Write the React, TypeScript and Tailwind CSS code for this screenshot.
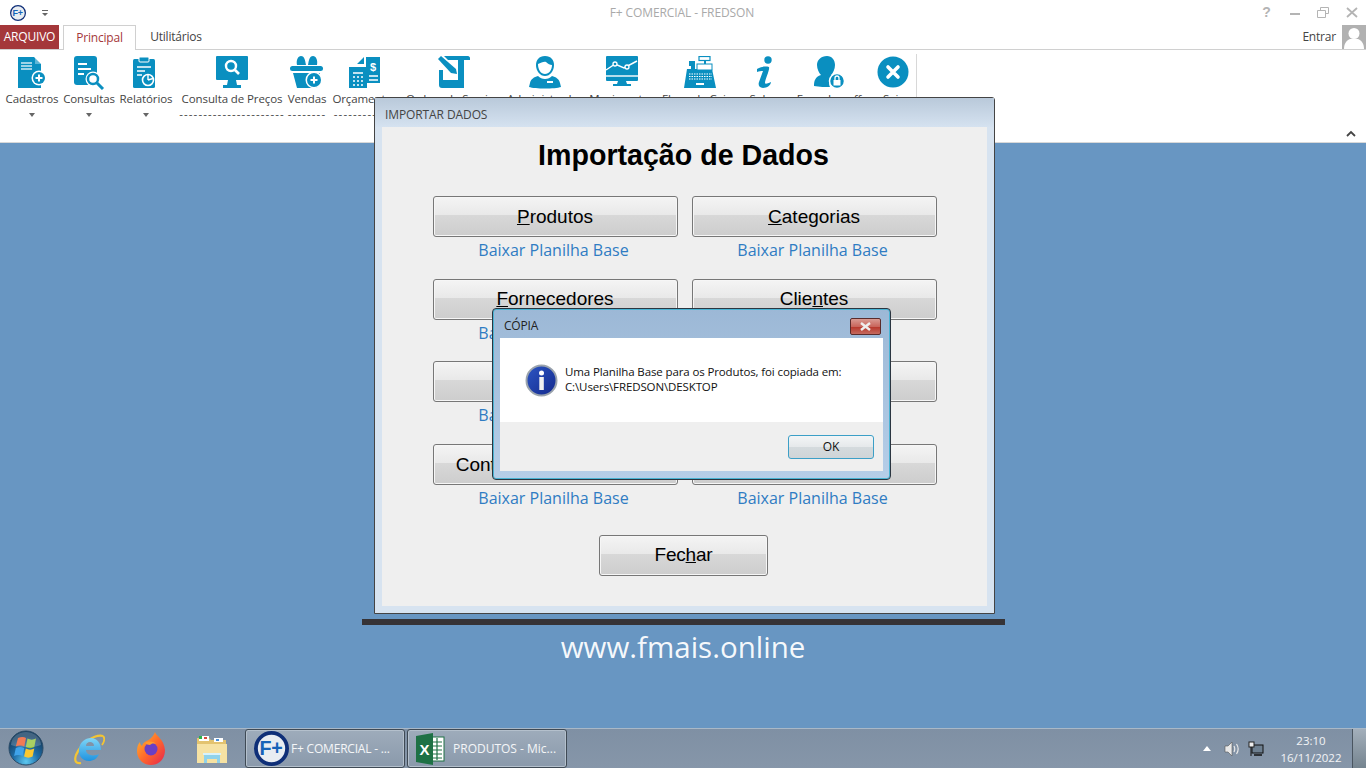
const BLUE = '#0a8fc0'

function Ico({ w = 34, h = 34, children }: { w?: number; h?: number; children: React.ReactNode }) {
  return <svg width={w} height={h} viewBox={`0 0 ${w} ${h}`} fill={BLUE} className="block">{children}</svg>
}

const PlusBadge = ({ cx, cy, r = 7 }: { cx: number; cy: number; r?: number }) => (
  <g>
    <circle cx={cx} cy={cy} r={r + 1.5} fill="#fff" />
    <circle cx={cx} cy={cy} r={r} fill={BLUE} />
    <path d={`M${cx - 3.5} ${cy}h7M${cx} ${cy - 3.5}v7`} stroke="#fff" strokeWidth="2" />
  </g>
)

const icons: Record<string, React.ReactNode> = {
  cadastros: (
    <Ico>
      <path d="M3 1h16l7 7v24H3z" />
      <path d="M6 7h11M6 10h11M6 13h11" stroke="#cfe9f4" strokeWidth="1.3" />
      <path d="M20 1l6 7h-6z" fill="#fff" opacity=".35" />
      <PlusBadge cx={24} cy={22} r={6} />
    </Ico>
  ),
  consultas: (
    <Ico>
      <rect x="2" y="0" width="23" height="29" rx="3" />
      <path d="M6 8h9M6 13h13M6 18h6" stroke="#fff" strokeWidth="2" />
      <circle cx="21" cy="23" r="7.5" fill="#fff" />
      <circle cx="21" cy="23" r="5" fill="none" stroke={BLUE} strokeWidth="2.5" />
      <path d="M25 27l6 6" stroke={BLUE} strokeWidth="3" />
    </Ico>
  ),
  relatorios: (
    <Ico>
      <rect x="4" y="3" width="22" height="29" rx="1.5" />
      <rect x="10" y="1" width="10" height="5" rx="1" stroke="#fff" strokeWidth="1" />
      <path d="M8 11h14M8 15h8M8 19h5" stroke="#fff" strokeWidth="1.6" />
      <circle cx="19" cy="24" r="5.5" fill="none" stroke="#fff" strokeWidth="1.6" />
      <path d="M19 24l5-1.5M19 24v-5" stroke="#fff" strokeWidth="1.4" />
    </Ico>
  ),
  precos: (
    <Ico>
      <rect x="1" y="0" width="32" height="24" rx="1" />
      <path d="M13 24h8l1 5h4v3H8v-3h4z" />
      <circle cx="16" cy="10" r="5" fill="none" stroke="#fff" strokeWidth="2.4" />
      <path d="M20 14l4 4" stroke="#fff" strokeWidth="2.6" />
    </Ico>
  ),
  vendas: (
    <Ico>
      <path d="M11 0c3 0 4 3 5 9H7c-1-5 1-9 4-9zM23 0c-3 0-4 3-5 9h9c1-5-1-9-4-9z" />
      <rect x="0" y="10" width="33" height="5" rx="2.500" />
      <path d="M3 17h27l-3 15H7z" />
      <PlusBadge cx={24} cy={24} r={7} />
    </Ico>
  ),
  orcamentos: (
    <Ico>
      <path d="M9 8l7-7v7zM18 1h14v26H18z" />
      <rect x="1" y="11" width="18" height="21" />
      <path d="M5 17h10M5 21h2M9 21h2M13 21h2M5 25h2M9 25h2M13 25h2M5 29h2M9 29h2M13 29h2" stroke="#fff" strokeWidth="1.6" />
      <path d="M21 20h9M21 24h9" stroke="#fff" strokeWidth="1.5" />
      <text x="25" y="15" fontSize="11" fontWeight="700" fill="#fff" textAnchor="middle" fontFamily="Liberation Sans">$</text>
    </Ico>
  ),
  ordem: (
    <Ico>
      <path d="M8 0h24c1 0 2 1 2 2v2h-6v28h-6V4H12z" />
      <path d="M3 14h4v10h15v8H6c-2 0-3-1-3-3z" />
      <path d="M2 3l3-3 15 13 1 5-6-1z" />
    </Ico>
  ),
  admin: (
    <Ico>
      <path d="M17 0c6 0 9 4 9 9 0 6-4 11-9 11S8 15 8 9c0-5 3-9 9-9z" />
      <path d="M10 8c3-1 6-3 8-2 2 2 4 3 6 3 0 5-3 9-7 9s-7-4-7-10z" fill="#fff" />
      <path d="M10 20c2 2 4 3 7 3s5-1 7-3c4 1 7 3 8 7l1 4c-6 2-26 2-32 0l1-4c1-4 4-6 8-7z" />
      <rect x="19" y="25" width="6" height="2" fill="#fff" />
    </Ico>
  ),
  movimento: (
    <Ico>
      <rect x="1" y="0" width="32" height="25" rx="1" />
      <path d="M1 14l9-6 9 4 13-7" fill="none" stroke="#fff" strokeWidth="1.5" />
      <circle cx="10" cy="8" r="2" fill={BLUE} stroke="#fff" strokeWidth="1.3" />
      <circle cx="22" cy="11" r="2" fill={BLUE} stroke="#fff" strokeWidth="1.3" />
      <path d="M1 20h32" stroke="#fff" strokeWidth="1.4" />
      <path d="M13 25h8l1 3h4v2H8v-2h4z" />
    </Ico>
  ),
  caixa: (
    <Ico>
      <path d="M1 32l3-19h4V9h4v4h17l4 19z" />
      <rect x="6" y="5" width="6" height="5" />
      <rect x="16" y="0.500" width="11" height="4" fill="none" stroke={BLUE} strokeWidth="1.200" />
      <rect x="21" y="5" width="2" height="3" />
      <rect x="14" y="8" width="15" height="6" fill="#fff" stroke={BLUE} />
      <path d="M6 18h23M6 20.500h23M6 23h23" stroke="#fff" strokeWidth="1.100" strokeDasharray="1.500 1" />
      <rect x="13" y="27" width="8" height="2" fill="#fff" />
    </Ico>
  ),
  sobre: (
    <Ico>
      <circle cx="20" cy="4" r="3.700" />
      <path d="M9 13c3-2 8-3 12-2 1 3-4 12-4 16 0 1 2 1 6-1 0 3-4 6-8 6-4 0-5-3-4-6l4-11c-2 0-4 0-6 1z" />
    </Ico>
  ),
  logoff: (
    <Ico>
      <path d="M15 0c5 0 8 4 8 9 0 4-2 8-4 10 2 1 3 1 4 2-5 1-7 6-5 10-4 0-11 0-16-1 0-5 1-9 7-11-2-2-4-6-4-10 0-5 4-9 10-9z" />
      <circle cx="25" cy="25" r="7.500" fill={BLUE} stroke="#fff" strokeWidth="1.500" />
      <rect x="21.500" y="24" width="7" height="5.500" fill="#fff" />
      <path d="M23 24v-2a2 2 0 014 0v2" fill="none" stroke="#fff" strokeWidth="1.300" />
    </Ico>
  ),
  sair: (
    <Ico>
      <circle cx="17" cy="16" r="15.500" />
      <path d="M12 11l10 10M22 11L12 21" stroke="#fff" strokeWidth="3.600" strokeLinecap="round" />
    </Ico>
  ),
}

const ribbon = [
  { id: 'cadastros', label: 'Cadastros', cls: 'w-[52px] ml-[6px]', arrow: true },
  { id: 'consultas', label: 'Consultas', cls: 'w-[52px] ml-[5px]', arrow: true },
  { id: 'relatorios', label: 'Relatórios', cls: 'w-[52px] ml-[5px]', arrow: true },
  { id: 'precos', label: 'Consulta de Preços', cls: 'w-[104px] ml-[8px]', dash: '----------------------' },
  { id: 'vendas', label: 'Vendas', cls: 'w-[40px] ml-[3px]', dash: '--------' },
  { id: 'orcamentos', label: 'Orçamentos', cls: 'w-[64px] ml-[6px]', dash: '-------------' },
  { id: 'ordem', label: 'Ordem de Serviço', cls: 'w-[96px] ml-[8px]' },
  { id: 'admin', label: 'Administrador', cls: 'w-[76px] ml-[6px]' },
  { id: 'movimento', label: 'Movimentos', cls: 'w-[66px] ml-[6px]' },
  { id: 'caixa', label: 'Fluxo de Caixa', cls: 'w-[76px] ml-[7px]' },
  { id: 'sobre', label: 'Sobre', cls: 'w-[34px] ml-[10px]' },
  { id: 'logoff', label: 'Fazer Logoff', cls: 'w-[64px] ml-[15px]' },
  { id: 'sair', label: 'Sair', cls: 'w-[30px] ml-[17px]' },
]

function FormButton({ children, cls }: { children: React.ReactNode; cls: string }) {
  return (
    <div className={`h-[41px] pt-[1px] flex items-center justify-center rounded-[3px] border border-[#777] text-[19px] text-black font-['Liberation_Sans',sans-serif] bg-[linear-gradient(#f4f4f4_0%,#e9e9e9_45%,#d8d8d8_46%,#cdcdcd_100%)] shadow-[inset_0_0_0_1px_#f6f6f6] whitespace-nowrap ${cls}`}>
      <span>{children}</span>
    </div>
  )
}

function ImportCell({ label }: { label: React.ReactNode }) {
  return (
    <div className="w-[245px]">
      <FormButton cls="w-full">{label}</FormButton>
      <div className="mt-[2px] pr-[3px] h-[39.67px] text-center text-[16px] leading-[22px] text-[#2f7cc3]">Baixar Planilha Base</div>
    </div>
  )
}

const Orb = () => (
  <svg width="36" height="36" viewBox="0 0 36 36">
    <defs>
      <radialGradient id="o" cx="50%" cy="90%" r="75%">
        <stop offset="0" stopColor="#5cc8f0" />
        <stop offset=".5" stopColor="#1f6ea8" />
        <stop offset="1" stopColor="#143f63" />
      </radialGradient>
    </defs>
    <circle cx="18" cy="18" r="17" fill="url(#o)" stroke="#2a4a66" />
    <path d="M10 8c3-1.500 6-1.500 8 0l-1.700 8.500c-2.500-1.500-6-1.500-8.500 0z" fill="#ef5a2b" />
    <path d="M19.500 8.500c2.500 1.500 6 1.500 8.500 0l-1.700 8.500c-2.500 1.500-6 1.500-8.500 0z" fill="#93c53d" />
    <path d="M7.800 18c2.500-1.500 6-1.500 8.500 0l-1.700 8c-2.500-1.500-6-1.500-8.500 0z" fill="#3fa3ea" />
    <path d="M17.800 18.500c2.500 1.500 6 1.500 8.500 0l-1.700 8c-2.500 1.500-6 1.500-8.500 0z" fill="#fbc82f" />
    <path d="M3 15a15 13 0 0130 0c-8 3-22 3-30 0z" fill="#fff" opacity=".2" />
  </svg>
)

const IE = () => (
  <svg width="32" height="32" viewBox="0 0 32 32" fill="none">
    <defs>
      <linearGradient id="ie" x1="0" y1="0" x2="0" y2="1">
        <stop offset="0" stopColor="#7fd6f7" />
        <stop offset="1" stopColor="#1f93e0" />
      </linearGradient>
    </defs>
    <path d="M30 3C22 1 8 10 3 22c-2 6 0 9 5 8" stroke="#f4c533" strokeWidth="2.200" />
    <path d="M30 3c2 2 1 6-1 9" stroke="#f4c533" strokeWidth="1.800" />
    <path d="M6 16c1-7 6-11 12-11 6 0 10 5 10 12H13c0 5 7 7 13 4-2 5-6 7-10 7-7 0-11-6-10-12zm7-3h8c0-3-2-4-4-4-2 0-4 1-4 4z" fill="url(#ie)" fillRule="evenodd" />
  </svg>
)

const Firefox = () => (
  <svg width="30" height="36" viewBox="0 0 30 36">
    <defs>
      <linearGradient id="fx" x1="0" y1="0" x2="1" y2="1">
        <stop offset="0" stopColor="#ffbd2e" />
        <stop offset=".5" stopColor="#ff6a2b" />
        <stop offset="1" stopColor="#e5234f" />
      </linearGradient>
    </defs>
    <path d="M19 1c1 4 9 7 10 18 0 9-6 15-14 15S1 28 1 20c0-4 1-7 3-9 0 2 1 3 2 4 1-4 5-5 8-7 2-2 4-4 5-7z" fill="url(#fx)" />
    <circle cx="15" cy="18" r="6.500" fill="#6b3fc4" />
    <path d="M9 12c3-2 8-2 11 1-3-1-5 0-6 1-2 0-4-1-5-2z" fill="#ff9a2e" />
  </svg>
)

const Folder = () => (
  <svg width="32" height="32" viewBox="0 0 32 32">
    <path d="M1 5h12l2 2h15v22H1z" fill="#e3c36f" />
    <rect x="3" y="3" width="10" height="5" fill="#fff" />
    <rect x="3" y="3" width="3" height="3" fill="#2bb34a" />
    <rect x="8" y="4" width="3" height="2" fill="#d9483a" />
    <rect x="18" y="5" width="9" height="4" fill="#fff" />
    <rect x="20" y="6" width="3" height="2" fill="#4a90d9" />
    <path d="M1 11h30v19H1z" fill="#f6e2a3" />
    <path d="M8 22h16v8h-3v-4H11v4H8z" fill="#8fd2ea" />
    <path d="M7 21h18" stroke="#d8f2fb" strokeWidth="2" />
  </svg>
)

const Excel = () => (
  <svg width="29" height="32" viewBox="0 0 29 32">
    <rect x="13" y="4" width="15" height="24" fill="#fff" stroke="#1e7145" />
    <path d="M16 9h10M16 13h10M16 17h10M16 21h10M16 25h10M21 5v22" stroke="#1e7145" strokeWidth="1.200" />
    <path d="M0 3l17-3v32l-17-3z" fill="#1e7145" />
    <text x="8.500" y="22" textAnchor="middle" fontSize="15" fontWeight="700" fill="#fff" fontFamily="Liberation Sans">X</text>
  </svg>
)

const FBadge = ({ size, border }: { size: number; border: number }) => (
  <svg width={size} height={size} viewBox="0 0 32 32">
    <circle cx="16" cy="16" r={16 - border / 2} fill="#e9edf2" stroke="#0f2f78" strokeWidth={border} />
    <text x="15.500" y="22" textAnchor="middle" fontSize="18" fontWeight="700" fill="#1763b8" fontFamily="Liberation Sans">F+</text>
  </svg>
)

function TaskButton({ icon, label, cls }: { icon: React.ReactNode; label: string; cls: string }) {
  return (
    <div className={`w-[160px] h-[39px] flex items-center rounded-[3px] border border-[#3f4a55] shadow-[inset_0_0_0_1px_#b4c0cc] bg-[linear-gradient(#9eacbb,#8a99ab)] text-white/90 text-[12px] whitespace-nowrap overflow-hidden ${cls}`}>
      <span className="shrink-0">{icon}</span>
      <span>{label}</span>
    </div>
  )
}

export default function App() {
  return (
    <div className="relative h-[768px] w-[1366px] overflow-hidden flex flex-col bg-white font-['Open_Sans',sans-serif] tracking-[-0.2px]">
      {/* title bar */}
      <div className="relative h-[25px] shrink-0 flex items-center">
        <span className="ml-[10px]"><FBadge size={16} border={2.5} /></span>
        <svg className="ml-[15px]" width="8" height="8" viewBox="0 0 8 8" fill="#666"><path d="M1 1h6v1H1zM1 4h6L4 7z" /></svg>
        <span className="flex-1 text-center text-[12px] text-[#a9a9a9] ml-[64px] tracking-[-0.1px]">F+ COMERCIAL - FREDSON</span>
        <div className="flex items-center text-[#b4b4b4] mr-[8px]">
          <span className="w-[31px] text-center text-[14px] font-bold font-['Liberation_Sans',sans-serif]">?</span>
          <svg className="ml-[8px]" width="10" height="10" viewBox="0 0 10 10" fill="#b4b4b4"><rect y="5" width="10" height="2" /></svg>
          <svg className="ml-[17px]" width="12" height="11" viewBox="0 0 12 11" fill="none" stroke="#b4b4b4"><path d="M3.500 3V.500h8v6H9M.500 3.500h8v7h-8z" /></svg>
          <svg className="ml-[17px]" width="12" height="11" viewBox="0 0 12 11" stroke="#b4b4b4" strokeWidth="1.800"><path d="M1 1l10 9M11 1L1 10" /></svg>
        </div>
      </div>
      {/* tab row */}
      <div className="h-[25px] shrink-0 flex items-stretch border-b border-[#d0d0d0] relative">
        <div className="w-[59px] bg-[#a4373a] text-white text-[12px] flex items-center justify-center">ARQUIVO</div>
        <div className="ml-[4px] w-[73px] h-[25px] bg-white border border-b-0 border-[#d0d0d0] text-[#a4373a] text-[12px] flex items-center justify-center">Principal</div>
        <div className="ml-[2px] w-[76px] text-[#444] text-[12px] flex items-center justify-center">Utilitários</div>
        <div className="ml-auto flex items-center text-[#444] text-[12px]">
          <span className="mr-[6px]">Entrar</span>
          <div className="w-[24px] h-[24px] bg-[#b1b1b1] overflow-hidden">
            <svg width="24" height="24" viewBox="0 0 24 24" fill="#fff"><circle cx="12" cy="8.500" r="5.500" /><path d="M2 24c0-6 3-9 6-10h8c3 1 6 4 6 10z" /></svg>
          </div>
        </div>
      </div>
      {/* ribbon */}
      <div className="relative h-[93px] shrink-0 border-b-[1px] border-[#d8d8d8] overflow-hidden">
        <div className="flex items-start h-full">
          {ribbon.map((r) => (
            <div key={r.id} className={`shrink-0 flex flex-col items-center ${r.cls}`}>
              <div className="h-[34px] mt-[6px] flex justify-center">{icons[r.id]}</div>
              <div className="mt-[1px] text-[11.5px] leading-[16px] text-[#444] whitespace-nowrap tracking-[-0.1px]">{r.label}</div>
              {r.arrow && <svg className="mt-[6px]" width="6" height="4" viewBox="0 0 6 4" fill="#666"><path d="M0 0h6L3 4z" /></svg>}
              {r.dash && <div className="mt-[1px] text-[11.500px] leading-[12px] text-[#444] whitespace-nowrap tracking-[1.1px]">{r.dash}</div>}
            </div>
          ))}
          <div className="absolute left-[916px] top-[4px] h-[44px] border-l border-[#d8d8d8]" />
        </div>
        <svg className="absolute right-[10px] bottom-[5px]" width="10" height="7" viewBox="0 0 10 7" fill="none" stroke="#444" strokeWidth="1.800"><path d="M1 6l4-4 4 4" /></svg>
      </div>
      {/* desktop */}
      <div className="flex-1 bg-[#6896c2] flex flex-col items-center pt-[476px]">
        <div className="w-[643px] h-[6px] bg-[#363336] shrink-0" />
        <div className="mt-[2px] text-[29.5px] leading-[40px] text-white/95 tracking-[0px]">www.fmais.online</div>
      </div>
      {/* taskbar */}
      <div className="h-[40px] shrink-0 bg-[linear-gradient(#7f90a4,#8696a9)] border-t border-[#a9b8c7] flex items-center relative">
        <div className="w-[36px] ml-[8px] -mt-[1px]"><Orb /></div>
        <div className="w-[32px] ml-[29px]"><IE /></div>
        <div className="w-[30px] ml-[31px]"><Firefox /></div>
        <div className="w-[32px] ml-[30px]"><Folder /></div>
        <div className="ml-[17px] flex gap-[2px]">
          <TaskButton cls="pl-[8px] gap-[2px] tracking-[-0.2px]" icon={<FBadge size={35} border={3.500} />} label="F+ COMERCIAL - ..." />
          <TaskButton cls="pl-[8px] gap-[8px] tracking-[0px]" icon={<Excel />} label="PRODUTOS - Mic..." />
        </div>
        <div className="ml-auto flex items-center h-full">
          <svg width="8" height="5" viewBox="0 0 8 5" fill="#fff"><path d="M4 0l4 5H0z" /></svg>
          <svg className="ml-[13px]" width="16" height="16" viewBox="0 0 16 16"><path d="M1 5h3l4-4v14l-4-4H1z" fill="#e8e8e8" stroke="#555" strokeWidth=".6" /><path d="M10 5c1 2 1 4 0 6M12.500 3c2 3 2 7 0 10" fill="none" stroke="#e8e8e8" strokeWidth="1.200" /></svg>
          <svg className="ml-[8px]" width="16" height="16" viewBox="0 0 16 16"><rect x="4" y="4" width="11" height="8" fill="#6d7f90" stroke="#111" /><path d="M6 14h8" stroke="#111" strokeWidth="1.500" /><rect x="1" y="1" width="5" height="5" fill="#eee" stroke="#222" /><path d="M3 6v9" stroke="#111" /></svg>
          <div className="w-[82px] ml-[6px] text-center text-[11.500px] leading-[17px] text-white/90 tracking-normal">
            <div>23:10</div>
            <div>16/11/2022</div>
          </div>
          <div className="w-[14px] h-full border-l border-[#4a5560] bg-[linear-gradient(#a3afbb,#75848f)]" />
        </div>
      </div>

      {/* importar dados window */}
      <div className="absolute left-[374px] top-[97px] w-[621px] h-[517px] border border-[#444] rounded-t-[3px] bg-[#d7e3f0] flex flex-col">
        <div className="h-[29px] shrink-0 pt-[4px] pl-[10px] flex items-center text-[12px] tracking-[-0.1px] text-[#444] bg-[linear-gradient(#b9c9da,#d5e2f0)]">IMPORTAR DADOS</div>
        <div className="mx-[7px] mb-[7px] flex-1 bg-[#efefef] flex flex-col items-center">
          <h1 className="mt-[10px] mr-[2px] text-[28.6px] leading-[36px] font-bold text-black font-['Liberation_Sans',sans-serif] tracking-normal">Importação de Dados</h1>
          <div className="mt-[23px] grid grid-cols-[245px_245px] gap-x-[14px] tracking-normal">
            <ImportCell label={<><u>P</u>rodutos</>} />
            <ImportCell label={<><u>C</u>ategorias</>} />
            <ImportCell label={<><u>F</u>ornecedores</>} />
            <ImportCell label={<>Clie<u>n</u>tes</>} />
            <ImportCell label="Funcionários" />
            <ImportCell label="Serviços" />
            <ImportCell label="Contas Pagar/ Receber" />
            <ImportCell label="Vendas" />
          </div>
          <FormButton cls="w-[169px] mt-[8px] mr-[2px]">Fec<u>h</u>ar</FormButton>
        </div>
      </div>

      {/* copia dialog */}
      <div className="absolute left-[492px] top-[308px] w-[399px] h-[172px] rounded-[4px] border border-[#2b3540] shadow-[inset_0_0_0_1px_#49b3d3] bg-[linear-gradient(#9cb8d6,#b6cee8)] flex flex-col">
        <div className="h-[29px] shrink-0 pt-[5px] pl-[11px] pr-[9px] flex items-center justify-between text-[12px] text-[#222]">
          <span>CÓPIA</span>
          <div className="w-[31px] h-[17px] rounded-[2px] border border-[#5a2b2b] bg-[linear-gradient(#d99a92_0%,#c9665c_50%,#b8392d_55%,#c46a5f_100%)] flex items-center justify-center">
            <svg width="13" height="9" viewBox="0 0 13 9" stroke="#eee" strokeWidth="2.400"><path d="M2 1l9 7M11 1L2 8" /></svg>
          </div>
        </div>
        <div className="mx-[7px] mb-[8px] flex-1 flex flex-col">
          <div className="h-[84px] bg-white flex items-center pl-[25px]">
            <svg width="33" height="33" viewBox="0 0 33 33">
              <defs>
                <linearGradient id="ib" x1="0" y1="0" x2="1" y2="1">
                  <stop offset="0" stopColor="#2c56c4" />
                  <stop offset="1" stopColor="#14298c" />
                </linearGradient>
              </defs>
              <circle cx="16.500" cy="16.500" r="15" fill="url(#ib)" stroke="#9aa3ad" strokeWidth="2" />
              <circle cx="16.500" cy="9" r="2.500" fill="#fff" />
              <rect x="14.300" y="13" width="4.500" height="13" fill="#f0f0f0" />
            </svg>
            <div className="ml-[7px] pb-[2px] text-[11.500px] leading-[15px] text-[#111] tracking-[-0.12px]">
              <div>Uma Planilha Base para os Produtos, foi copiada em:</div>
              <div>C:\Users\FREDSON\DESKTOP</div>
            </div>
          </div>
          <div className="flex-1 bg-[#efefef] flex items-center justify-end pr-[9px]">
            <div className="w-[86px] h-[24px] rounded-[3px] border border-[#3c9fc7] bg-[linear-gradient(#f3f5f6_0%,#e6e9eb_48%,#d4dadd_50%,#cfd5d8_100%)] text-[12px] text-[#111] flex items-center justify-center">OK</div>
          </div>
        </div>
      </div>
    </div>
  )
}
